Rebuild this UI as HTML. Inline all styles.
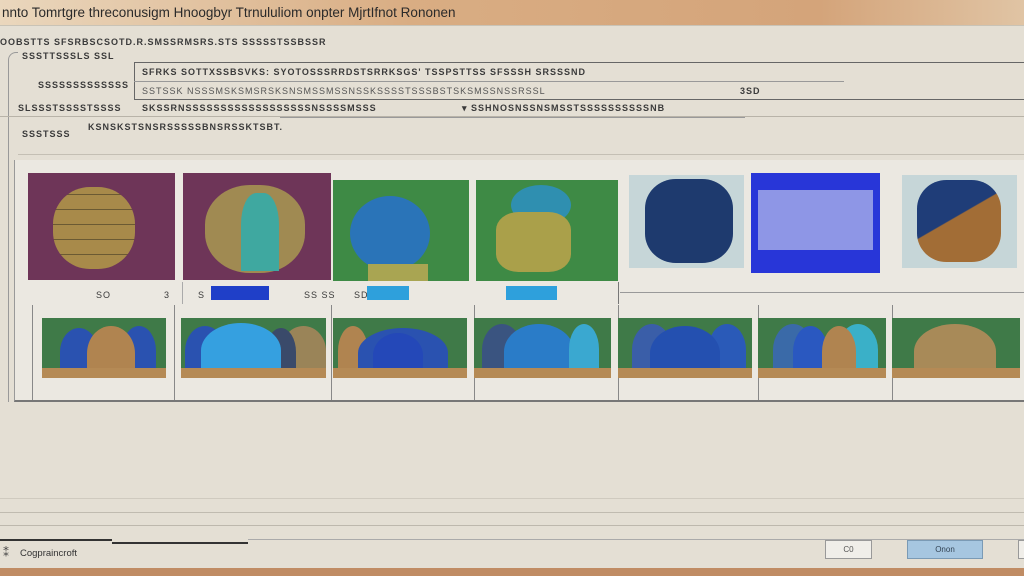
<!DOCTYPE html>
<html><head><style>
*{margin:0;padding:0;box-sizing:border-box}
body{width:1024px;height:576px;overflow:hidden;background:#e4dfd4;font-family:"Liberation Sans",sans-serif;position:relative;color:#333}
.a{position:absolute}
.t{position:absolute;font-size:9px;letter-spacing:1px;color:#3a3a3a;white-space:nowrap;font-weight:bold}
.hl{position:absolute;height:1px;background:#8a8780}
.vl{position:absolute;width:1px;background:#8a8780}
.img{position:absolute;overflow:hidden}
.cell{position:absolute;top:305px;height:95px;border-left:1px solid #888;background:#ebe8e1}
.bot{position:absolute;top:318px;height:60px;background:#3f7a48;overflow:hidden}
.blob{position:absolute;border-radius:50% 50% 10% 10%}
.sand{position:absolute;left:0;right:0;bottom:0;height:10px;background:#b58a55}
</style></head><body>
<div class="a" style="left:0;top:0;width:1024px;height:25px;background:linear-gradient(90deg,#ead7bd,#d9ad83 40%,#d4a47a 80%,#e0c4a4)"></div>
<div class="a" style="left:2px;top:5px;font-size:13.5px;color:#2a2a2a;white-space:nowrap">nnto Tomrtgre threconusigm Hnoogbyr Ttrnululiom onpter MjrtIfnot Rononen</div>
<div class="hl" style="left:0;top:25px;width:1024px;background:#c9c3b6"></div>

<div class="t" style="left:0;top:37px">OOBSTTS SFSRBSCSOTD.R.SMSSRMSRS.STS SSSSSTSSBSSR</div>
<div class="t" style="left:22px;top:51px">SSSTTSSSLS SSL</div>
<div class="a" style="left:8px;top:52px;width:10px;height:350px;border-left:1px solid #999;border-top:1px solid #999;border-radius:8px 0 0 0"></div>
<div class="hl" style="left:134px;top:62px;width:890px;background:#666"></div>
<div class="vl" style="left:134px;top:62px;height:38px;background:#666"></div>
<div class="hl" style="left:134px;top:99px;width:890px;background:#666"></div>
<div class="hl" style="left:134px;top:81px;width:710px;background:#999"></div>
<div class="t" style="left:142px;top:67px">SFRKS SOTTXSSBSVKS: SYOTOSSSRRDSTSRRKSGS' TSSPSTTSS SFSSSH SRSSSND</div>
<div class="t" style="left:142px;top:86px;font-weight:normal;color:#555">SSTSSK NSSSMSKSMSRSKSNSMSSMSSNSSKSSSSTSSSBSTSKSMSSNSSRSSL</div>
<div class="t" style="left:740px;top:86px">3SD</div>
<div class="t" style="left:38px;top:80px">SSSSSSSSSSSSS</div>
<div class="t" style="left:18px;top:103px">SLSSSTSSSSTSSSS</div>
<div class="t" style="left:142px;top:103px">SKSSRNSSSSSSSSSSSSSSSSSSNSSSSMSSS</div>
<div class="t" style="left:462px;top:103px">▾ SSHNOSNSSNSMSSTSSSSSSSSSSNB</div>
<div class="hl" style="left:0;top:116px;width:1024px;background:#b8b3a8"></div>
<div class="hl" style="left:280px;top:117px;width:465px;background:#999"></div>
<div class="t" style="left:88px;top:122px">KSNSKSTSNSRSSSSSBNSRSSKTSBT.</div>
<div class="t" style="left:22px;top:129px">SSSTSSS</div>
<div class="hl" style="left:18px;top:154px;width:1006px;background:#c4bfb4"></div>

<div class="a" style="left:14px;top:160px;width:1010px;height:242px;background:#ebe8e1;border-left:1px solid #999;border-bottom:2px solid #777"></div>

<!-- top thumbnails -->
<div class="img" style="left:28px;top:173px;width:147px;height:107px;background:#6e3558">
 <div class="a" style="left:25px;top:14px;width:82px;height:82px;border-radius:45%;background:repeating-linear-gradient(0deg,#a88a4a 0 14px,#6b5a33 14px 15px),#a88a4a"></div></div>
<div class="img" style="left:183px;top:173px;width:148px;height:107px;background:#6e3558">
 <div class="a" style="left:22px;top:12px;width:100px;height:88px;border-radius:45%;background:#a08a52"></div>
 <div class="a" style="left:58px;top:20px;width:38px;height:78px;border-radius:40% 40% 0 0;background:#3fa8a0"></div></div>
<div class="img" style="left:333px;top:180px;width:136px;height:101px;background:#3e8a45">
 <div class="a" style="left:17px;top:16px;width:80px;height:75px;border-radius:50%;background:#2a74b8"></div>
 <div class="a" style="left:35px;top:84px;width:60px;height:17px;background:#a9a552"></div></div>
<div class="img" style="left:476px;top:180px;width:142px;height:101px;background:#3e8a45">
 <div class="a" style="left:35px;top:5px;width:60px;height:40px;border-radius:50%;background:#2f8fb0"></div>
 <div class="a" style="left:20px;top:32px;width:75px;height:60px;border-radius:30%;background:#aaa04a"></div></div>
<div class="img" style="left:629px;top:175px;width:115px;height:93px;background:#c6d6d8">
 <div class="a" style="left:16px;top:4px;width:88px;height:84px;border-radius:35%;background:#1e3a6e"></div></div>
<div class="img" style="left:751px;top:173px;width:129px;height:100px;background:#2836d8">
 <div class="a" style="left:7px;top:17px;width:115px;height:60px;background:#8e96e6"></div></div>
<div class="img" style="left:902px;top:175px;width:115px;height:93px;background:#c6d6d8">
 <div class="a" style="left:15px;top:5px;width:84px;height:82px;border-radius:35%;background:linear-gradient(150deg,#1f3d78 45%,#a26d36 46%)"></div></div>

<div class="a" style="left:211px;top:286px;width:58px;height:14px;background:#1f3fc8"></div>
<div class="a" style="left:367px;top:286px;width:42px;height:14px;background:#2ea0dc"></div>
<div class="a" style="left:506px;top:286px;width:51px;height:14px;background:#2ea0dc"></div>
<div class="t" style="left:96px;top:290px;font-weight:normal">SO</div>
<div class="t" style="left:164px;top:290px;font-weight:normal">3</div>
<div class="t" style="left:198px;top:290px;font-weight:normal">S</div>
<div class="t" style="left:304px;top:290px;font-weight:normal">SS SS</div>
<div class="t" style="left:354px;top:290px;font-weight:normal">SD</div>
<div class="vl" style="left:182px;top:282px;height:22px;background:#aaa"></div>
<div class="vl" style="left:618px;top:282px;height:22px;background:#777"></div>
<div class="hl" style="left:620px;top:292px;width:404px;background:#999"></div>
<div class="hl" style="left:32px;top:305px;width:992px;background:#666"></div>

<!-- bottom cells -->
<div class="cell" style="left:32px;width:143px"></div>
<div class="cell" style="left:174px;width:157px"></div>
<div class="cell" style="left:331px;width:143px"></div>
<div class="cell" style="left:474px;width:145px"></div>
<div class="cell" style="left:618px;width:140px"></div>
<div class="cell" style="left:758px;width:134px"></div>
<div class="cell" style="left:892px;width:132px"></div>

<div class="bot" style="left:42px;width:124px"><div class="blob" style="left:18px;top:10px;width:38px;height:48px;background:#2a52b0"></div><div class="blob" style="left:80px;top:8px;width:34px;height:50px;background:#2a52b0"></div><div class="blob" style="left:45px;top:8px;width:48px;height:55px;background:#b08450"></div><div class="sand"></div></div>
<div class="bot" style="left:181px;width:145px"><div class="blob" style="left:4px;top:8px;width:40px;height:50px;background:#2a52b0"></div><div class="blob" style="left:100px;top:8px;width:45px;height:50px;background:#9a8458"></div><div class="blob" style="left:85px;top:10px;width:30px;height:48px;background:#3a4a6a"></div><div class="blob" style="left:20px;top:5px;width:80px;height:55px;background:#35a0e0"></div><div class="sand"></div></div>
<div class="bot" style="left:333px;width:134px"><div class="blob" style="left:5px;top:8px;width:30px;height:50px;background:#b08450"></div><div class="blob" style="left:25px;top:10px;width:90px;height:50px;background:#2a52b0"></div><div class="blob" style="left:40px;top:15px;width:50px;height:45px;background:#2448b8"></div><div class="sand"></div></div>
<div class="bot" style="left:474px;width:137px"><div class="blob" style="left:8px;top:6px;width:40px;height:52px;background:#3a5480"></div><div class="blob" style="left:30px;top:6px;width:70px;height:55px;background:#2a7cc8"></div><div class="blob" style="left:95px;top:6px;width:30px;height:50px;background:#3aa8d0"></div><div class="sand"></div></div>
<div class="bot" style="left:618px;width:134px"><div class="blob" style="left:14px;top:6px;width:40px;height:52px;background:#3a5ea8"></div><div class="blob" style="left:90px;top:6px;width:38px;height:52px;background:#2a5ab8"></div><div class="blob" style="left:32px;top:8px;width:70px;height:55px;background:#2450b0"></div><div class="sand"></div></div>
<div class="bot" style="left:758px;width:128px"><div class="blob" style="left:15px;top:6px;width:40px;height:52px;background:#3a6aa8"></div><div class="blob" style="left:80px;top:6px;width:40px;height:52px;background:#3ab0c8"></div><div class="blob" style="left:35px;top:8px;width:35px;height:52px;background:#2a58c0"></div><div class="blob" style="left:64px;top:8px;width:34px;height:52px;background:#b08450"></div><div class="sand"></div></div>
<div class="bot" style="left:892px;width:128px"><div class="blob" style="left:22px;top:6px;width:82px;height:55px;background:#a88a58;border-radius:50% 50% 20% 20%"></div><div class="sand"></div></div>

<div class="hl" style="left:0;top:498px;width:1024px;background:#cfcabf"></div>
<div class="hl" style="left:0;top:512px;width:1024px;background:#c0bbb0"></div>
<div class="hl" style="left:0;top:525px;width:1024px;background:#bdb8ad"></div>
<div class="a" style="left:0;top:539px;width:112px;height:2px;background:#333"></div>
<div class="a" style="left:112px;top:542px;width:136px;height:2px;background:#333"></div>
<div class="a" style="left:248px;top:539px;width:776px;height:1px;background:#aaa"></div>
<div class="a" style="left:3px;top:546px;font-size:12px;color:#444">⁑</div>
<div class="a" style="left:20px;top:548px;font-size:9.5px;color:#333">Cogpraincroft</div>
<div class="a" style="left:825px;top:540px;width:47px;height:19px;background:#f0eee9;border:1px solid #999;font-size:8px;text-align:center;line-height:17px;color:#555">C0</div>
<div class="a" style="left:907px;top:540px;width:76px;height:19px;background:#a6c6e0;border:1px solid #7a9ab5;font-size:8px;text-align:center;line-height:17px;color:#345">Onon</div>
<div class="a" style="left:1018px;top:540px;width:10px;height:19px;background:#f0eee9;border:1px solid #999"></div>
<div class="a" style="left:0;top:568px;width:1024px;height:8px;background:#c08c64"></div>
</body></html>
